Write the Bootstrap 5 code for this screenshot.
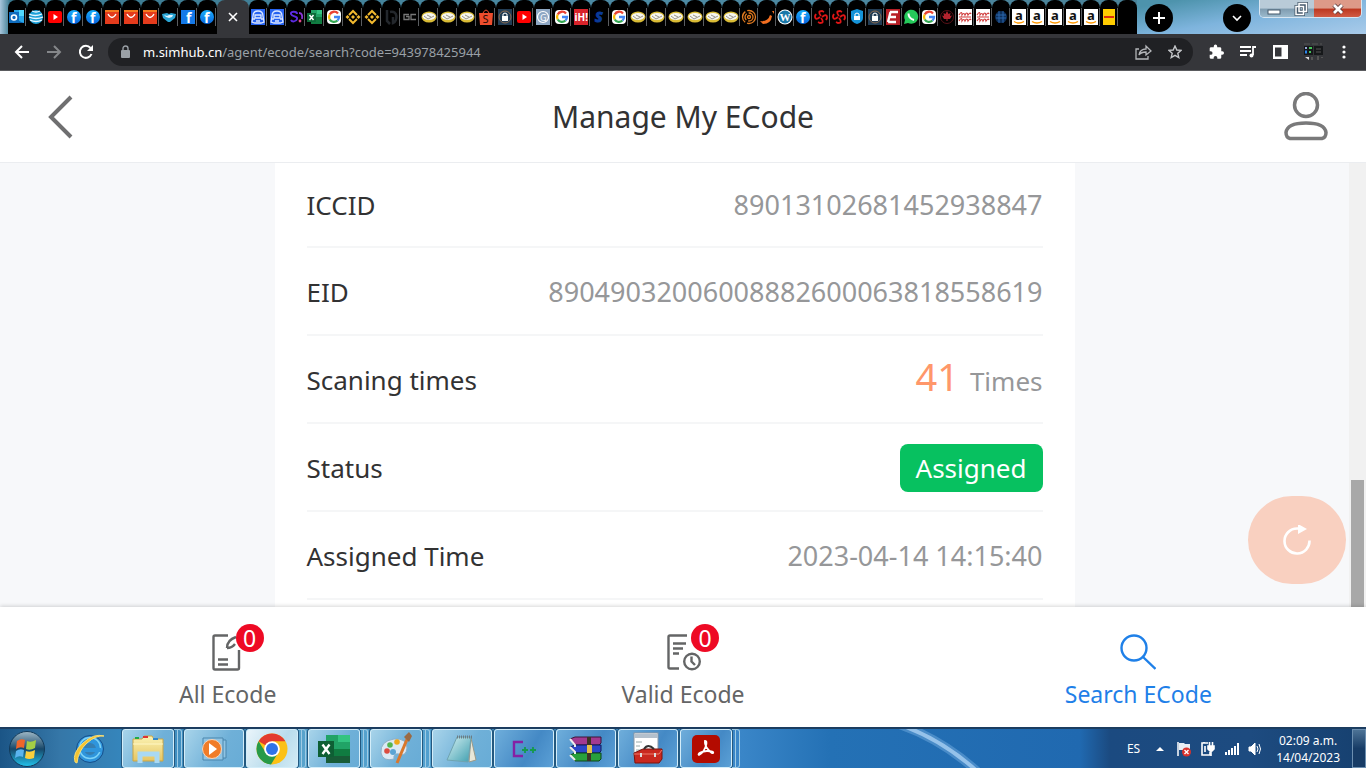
<!DOCTYPE html>
<html lang="en">
<head>
<meta charset="utf-8">
<meta name="viewport" content="width=device-width, initial-scale=1">
<title>Manage My ECode</title>
<link href="https://cdn.jsdelivr.net/npm/bootstrap@5.3.0/dist/css/bootstrap.min.css" rel="stylesheet">
<style>
  body { font-family: "Noto Sans", "Open Sans", sans-serif; color: #323233; overflow: hidden; }
  svg { display: block; flex: none; }
  a { color: inherit; text-decoration: none; }

  /* Browser window */
  .tabstrip { height: 34px; padding-left: 8px; background: linear-gradient(90deg, #a9c6dc 0, #3a7a90 10px, #4d8ba5 48%, #4a8298 84%, #6fa9cf 86%, #4a8ea6 88%, #7fb6dc 92%, #9cc6e8 100%); }
  .tab { width: 19px; height: 34px; background: #000; border-radius: 8px 8px 0 0; }
  .tab::after { content: ""; width: 1px; height: 18px; background: #5a5d60; flex: none; }
  .tab.slim { width: 18px; }
  .tab svg { overflow: visible; }
  .tabs { background: linear-gradient(transparent 8px, #000 8px); border-radius: 0 0 8px 0; }
  .tab-open { width: 32px; height: 34px; background: #35363a; border-radius: 8px 8px 0 0; color: #fff; }
  .tab-rest { width: 19px; background: #000; border-radius: 8px 8px 0 0; }
  .round-btn { width: 28px; height: 28px; background: #000; color: #fff; }
  .sky { background: linear-gradient(170deg, #4d93ac 10%, #7eb4dd 50%, #a9cbea 100%); }
  .win { border: 1px solid #d8e6f2; border-top: 0; border-radius: 0 0 5px 5px; height: 18px; overflow: hidden; }
  .win button { width: 27px; height: 18px; background: linear-gradient(#b9cbd8 45%, #7f9cb0 50%, #9fbdd0); border-right: 1px solid #56707f; }
  .win .quit { width: 47px; background: linear-gradient(#dd9a88 45%, #bd3820 50%, #d3604a); border: 0; }
  .toolbar { height: 37px; background: #35363a; border-bottom: 1px solid #5a5b5e; color: #fff; padding: 0 16px 0 14px; }
  .address { height: 28px; background: #202124; color: #9aa0a6; font-size: 13px; line-height: 28px; padding: 0 11px 0 12px; margin-left: 14px; }
  .mute { color: #85878a; }

  /* App */
  .app-head { height: 92px; background: #fff; border-bottom: 1px solid #ebedf0; padding: 0 36px; color: #6f6f70; }
  .app-head h1 { font-size: 30px; line-height: 40px; color: #323233; }
  .stage { background: #f7f8fa; min-height: 0; }
  .sheet { width: 800px; max-width: 100%; background: #fff; padding: 0 32px; font-size: 26px; line-height: 36px; }
  .line { height: 88px; flex: none; padding-top: 2px; border-bottom: 2px solid #f5f6f7; }
  .line:first-child { height: 85px; padding-top: 0; }
  .line dt { font-weight: 400; }
  .line dd { margin: 0; color: #969799; }
  .line .figures { font-size: 27px; }
  .count { font-size: 38px; line-height: 28px; color: #ff976a; margin-right: 11px; }
  .line .status { background: #07c160; color: #fff; border-radius: 8px; height: 48px; line-height: 48px; padding: 0 16px; }
  .scroll { width: 17px; background: #f1f1f1; padding: 0 2px; }
  .thumb { height: 127px; background: #a8a8a8; }
  .fab { right: 20px; bottom: 23px; width: 98px; height: 88px; border-radius: 44px; background: #f9d0c0; color: #fff; }
  .bottom-nav { height: 120px; padding-top: 8px; background: #fff; box-shadow: 0 -1px 4px rgba(0,0,0,.16); color: #646566; font-size: 23px; line-height: 30px; z-index: 2; }
  .bottom-nav .on { color: #1f80e8; }
  .pip { left: 26px; top: -9px; width: 28px; height: 28px; background: #ee0a24; color: #fff; line-height: 28px; }

  /* Desktop bar */
  .taskbar { height: 41px; border-top: 2px solid #1d3f63; color: #fff; background: linear-gradient(90deg, #1b5586 0, #3577a8 60px, #3585bb 120px, #58a3cc 300px, #4a9bd0 560px, #3a86c8 740px, #2471b5 830px, #2069b0 1080px, #1b4a80 1110px, #1d4b80 1250px, #16406f 100%); }
  .orb { width: 54px; }
  .task { width: 62px; height: 39px; padding-right: 2px; }
  .task > span { border: 1px solid #d3edf9; border-radius: 3px; background: linear-gradient(120deg, #a8d4ea, #6fb0d8 60%, #68acd6); box-shadow: 0 0 0 1px #23587f; }
  .task.dim > span { background: linear-gradient(120deg, #6faedb, #4489c5 60%, #5ba0d6); }
  .task.lit > span { background: linear-gradient(120deg, #eaf5fb, #b9dcec 60%, #d3ebf5); }
  .task.more::after { content: ""; width: 8px; flex: none; border: solid #9fcbe4; border-width: 1px 1px 1px 0; border-radius: 0 3px 3px 0; background: linear-gradient(90deg, transparent 3px, #9fcbe4 3px 4px, transparent 4px); }
  .tray { font-size: 12px; line-height: 17px; }
  .peek { width: 14px; border: 1px solid #6c8fb0; background: linear-gradient(#4d7396, #173c66 50%); }
</style>
</head>
<body class="vh-100 d-flex flex-column">

<svg width="0" height="0" class="position-absolute" aria-hidden="true">
  <defs>
    <linearGradient id="fbg" x2="0" y2="1"><stop stop-color="#19aefc"/><stop offset="1" stop-color="#0866e0"/></linearGradient>
    <linearGradient id="orbg" x2="0" y2="1"><stop stop-color="#9fb8c6"/><stop offset=".5" stop-color="#174769"/><stop offset="1" stop-color="#22c4ee"/></linearGradient>
    <linearGradient id="fold" x2="0" y2="1"><stop stop-color="#fbf3b4"/><stop offset="1" stop-color="#e6c561"/></linearGradient>
    <linearGradient id="pad" x2="1" y2="1"><stop stop-color="#d6f0f2"/><stop offset="1" stop-color="#3f9fb0"/></linearGradient>
  </defs>
</svg>

<!-- Favicons, drawn on a 16 by 16 grid -->
<template id="favicons"><svg>
  <g id="outlook"><path fill="#28a8ea" d="M5 1h10v13H5z"/><path fill="#50d9ff" d="M10 1h5v6h-5z"/><path fill="#0a60b0" d="M5 10l10 4H5z"/><rect y="3" width="10" height="11" fill="#0f6cbd"/><circle cx="5" cy="8.500" r="2.500" fill="none" stroke="#fff" stroke-width="1.600"/></g>
  <g id="att"><circle cx="8" cy="8" r="7" fill="#1ba0d8"/><path d="M1 5q6 3 13 0M1 8q7 3 14 0M2 11q6 3 12 0M4 2q4 2 8 0" stroke="#e6f6ff" stroke-width="1.300" fill="none"/></g>
  <g id="yt"><rect x="1" y="2" width="14" height="12" rx="2" fill="#f00"/><path d="M6.500 5l4.500 3-4.500 3z" fill="#fff"/></g>
  <g id="fb"><circle cx="8" cy="8" r="7" fill="url(#fbg)"/><text x="5" y="14" font-size="14" font-weight="700" fill="#fff">f</text></g>
  <g id="fbs"><rect x="1" y="1" width="14" height="14" fill="#1479e8"/><text x="6" y="14" font-size="14" font-weight="700" fill="#fff">f</text></g>
  <g id="ali"><rect x="1" y="1" width="14" height="14" fill="#e43b1c"/><path d="M1 1h14v2H1z" fill="#f47a1f"/><path d="M4 5q4 7 8 0" stroke="#fff" stroke-width="1.300" fill="none"/></g>
  <g id="shakeb"><path d="M1 5l5-1 2 1 2-1 5 1-1 4-5 4-2 0-5-4z" fill="#2aa5d4"/><path d="M3 6l3 1 2-1 4 0-1 2-3 1-3-1z" fill="#dff4ff"/></g>
  <g id="baidu"><rect x="1" y="0" width="14" height="16" fill="#2763f0"/><path d="M3 7q0-5 5-5t5 5l1 6-3 1H5l-3-1zM5 6h6v3H5zM6 12h4M3 10h2m6 0h2" stroke="#dce8ff" stroke-width="1.300" fill="none"/></g>
  <g id="sp"><path d="M9 5c0-3-7-3-6 0s7 2 6 5-5 3-6 1" stroke="#5b2be0" stroke-width="2" fill="none"/><path d="M11 4q4 0 3 6" stroke="#8a35d8" stroke-width="1.800" fill="none"/><circle cx="12" cy="12" r="1.400" fill="#e2468c"/></g>
  <g id="excel"><path fill="#21a366" d="M4 1h11v14H4z"/><path fill="#107c41" d="M9 8h6v7H4V8z"/><path fill="#33c481" d="M10 1h5v4h-5z"/><rect y="4" width="9" height="9" fill="#0b6b38"/><path d="M2.500 6l4 5m0-5l-4 5" stroke="#fff" stroke-width="1.500"/></g>
  <g id="goog"><rect x="1" y="1" width="14" height="14" rx="4" fill="#fff"/><g fill="none" stroke-width="2.300"><path d="M12 4.500A5 5 0 0 0 3.700 5.500" stroke="#ea4335"/><path d="M3.700 5.500a5 5 0 0 0 0 5" stroke="#fbbc05"/><path d="M3.700 10.500a5 5 0 0 0 7.800 1" stroke="#34a853"/><path d="M11.500 11.500A5 5 0 0 0 13 8H8" stroke="#4285f4"/></g></g>
  <g id="bin"><path d="M4 6l4-4 4 4M4 10l4 4 4-4" stroke="#f3ba2f" stroke-width="2" fill="none"/><path d="M8 6l2 2-2 2-2-2zM2.500 6L4.500 8 2.500 10 .5 8zM13.500 6L15.500 8l-2 2-2-2z" fill="#f3ba2f"/></g>
  <g id="darkb"><path d="M4 1v11l3 3M7 3c8-2 8 9 3 11V8" stroke="#23272c" stroke-width="2.500" fill="none"/></g>
  <g id="gc"><path d="M7 5.500H2v5h5v-3H4M14 5.500H9v5h5" stroke="#777" stroke-width="1.300" fill="none"/></g>
  <g id="shake"><ellipse cx="8" cy="8" rx="7.500" ry="5.500" fill="#d9bb35"/><ellipse cx="8" cy="7.500" rx="6.500" ry="3.500" fill="#f7f6f0"/><path d="M3 7l4 3 6-3M6 6l4 2" stroke="#98948a" fill="none"/></g>
  <g id="shopee"><path d="M1 4h14l-1 12H2z" fill="#ee4d2d"/><path d="M5 4q3-6 6 0" stroke="#ee4d2d" fill="none"/><text x="4.500" y="14" font-size="11" fill="#2a0a05">S</text></g>
  <g id="lock"><rect x="1" width="14" height="16" fill="#223d55"/><circle cx="8" cy="8" r="6" fill="none" stroke="#8a6a50"/><rect x="5" y="7" width="6" height="5" fill="#fff"/><path d="M6 7V5q2-2 4 0v2" stroke="#fff" fill="none"/></g>
  <g id="gg"><rect x="1" width="14" height="16" fill="#8fa8c4"/><circle cx="8" cy="8" r="5.500" fill="none" stroke="#fff" stroke-width="1.200"/><text x="5" y="11.500" font-size="9" fill="#fff">G</text></g>
  <g id="ih"><rect x="1" width="14" height="16" fill="#d8232a"/><text x="1.500" y="12" font-size="10" font-weight="700" fill="#fff">iH!</text></g>
  <g id="sblue"><text x="3" y="13" font-size="14" font-weight="800" font-style="italic" fill="#0a3a98" stroke="#0a3a98">S</text></g>
  <g id="spiral"><g fill="none" stroke="#e07a1f" stroke-width="1.300"><circle cx="8" cy="8" r="6.500" stroke-dasharray="12 2"/><circle cx="8" cy="8" r="4" stroke-dasharray="7 2"/><circle cx="8" cy="8" r="1.500"/></g></g>
  <g id="chili"><path d="M1 12q8 1 10-6l2 1q-1 8-9 8zM13 2h2v3z" fill="#f36f21"/></g>
  <g id="wp"><circle cx="8" cy="8" r="7.500" fill="#fff"/><circle cx="8" cy="8" r="6.500" fill="#1b78a8"/><text x="2.500" y="12" font-size="11" font-family="Liberation Serif, serif" font-weight="700" fill="#fff">W</text></g>
  <g id="swirl"><path d="M8 7q-4-5 1-5l2 1M9 8q5-4 5 1l-1 2M8 9q4 5-1 5l-2-1M7 8q-5 4-5-1l1-2" stroke="#e01515" stroke-width="1.800" fill="none"/></g>
  <g id="shield"><path d="M8 0l6 2v7q0 4-6 6-6-2-6-6V2z" fill="#1593d8"/><rect x="5" y="7" width="6" height="4" fill="#fff"/><path d="M6 7V5q2-2 4 0v2" stroke="#fff" fill="none"/></g>
  <g id="ered"><rect x="1" width="14" height="16" fill="#b71f26"/><path d="M5 3h8M4.500 8H11M3 13h8M5.500 3L3 13" stroke="#fff" stroke-width="2.400"/></g>
  <g id="wa"><path d="M1 15l1-4a7 7 0 1 1 3 3z" fill="#25c95a"/><path d="M5.500 4.500q0 5 5.500 6.500" stroke="#fff" stroke-width="2" fill="none"/></g>
  <g id="maple"><circle cx="8" cy="8" r="6.500" fill="none" stroke="#5a1218"/><path d="M8 2l1.500 3 2-1-.5 3 2-.5L11 10H8.500v2h-1v-2H5L3 6.500 5 7l-.5-3 2 1z" fill="#b3232e"/></g>
  <g id="script"><rect x="1" width="14" height="16" fill="#fff"/><path d="M2 6q3-5 3 0 2-3 3 0 2-4 3 0 2-3 3-1M2 12q3-5 3 0 2-3 3 0 2-4 3 0 2-3 3-1M2 8h12" stroke="#cf3a3a" stroke-width="1.200" fill="none"/></g>
  <g id="globe"><circle cx="8" cy="8" r="6" fill="#0d2f5a"/><path d="M3 6h10M3 9h10M6 2v12M10 2v12" stroke="#2a66ad"/></g>
  <g id="amz"><rect x="1" width="14" height="16" fill="#fff"/><text x="4" y="10.500" font-size="13" font-weight="700" fill="#111">a</text><path d="M3 12.500q5 3 10 0" stroke="#f90" stroke-width="1.400" fill="none"/></g>
  <g id="dhl"><rect x="2" width="12" height="16" fill="#fc0"/><path d="M3 8h10" stroke="#d40511" stroke-width="1.600"/></g>
</svg></template>

<!-- Tab strip -->
<header class="tabstrip d-flex flex-shrink-0">
  <nav class="tabs d-flex" aria-label="Tabs">
    <div class="d-flex" data-tabs="outlook att yt fb fb ali ali ali shakeb fbs fb"></div>
    <button class="tab-open btn border-0 p-0 d-flex align-items-center justify-content-center" aria-label="Close tab"><svg width="10" height="10" stroke="currentColor" stroke-width="1.600"><path d="M1 1l8 8M9 1L1 9"/></svg></button>
    <div class="d-flex" data-tabs="baidu baidu sp excel goog bin bin darkb gc shake shake shake shopee lock yt gg goog ih sblue goog shake shake shake"></div>
    <div class="d-flex" data-slim data-tabs="shake shake shake spiral chili wp fb swirl swirl shield lock ered wa goog maple script script globe amz amz amz amz amz dhl"></div>
    <span class="tab-rest"></span>
  </nav>
  <div class="sky d-flex flex-grow-1 ps-2">
    <button class="round-btn btn border-0 rounded-circle p-0 d-flex align-items-center justify-content-center mt-1" aria-label="New tab"><svg width="12" height="12" stroke="currentColor" stroke-width="2"><path d="M6 0v12M0 6h12"/></svg></button>
    <button class="round-btn btn border-0 rounded-circle p-0 d-flex align-items-center justify-content-center mt-1 ms-auto me-2" aria-label="Search tabs"><svg width="10" height="7" fill="none" stroke="currentColor" stroke-width="1.600"><path d="M1 1l4 4 4-4"/></svg></button>
    <div class="win d-flex me-1">
      <button class="btn rounded-0 border-0 p-0 d-flex align-items-center justify-content-center" aria-label="Minimize"><svg width="14" height="14"><rect x="1" y="8" width="12" height="4" fill="#fff" stroke="#44596b"/></svg></button>
      <button class="btn rounded-0 border-0 p-0 d-flex align-items-center justify-content-center" aria-label="Restore"><svg width="14" height="14" fill="none"><path d="M5 1.500h7.500v8H5zM2 4.500h7.500v8H2z" stroke="#44596b" stroke-width="3"/><path d="M5 1.500h7.500v8H5zM2 4.500h7.500v8H2z" stroke="#fff" stroke-width="1.500"/></svg></button>
      <button class="quit btn rounded-0 p-0 d-flex align-items-center justify-content-center" aria-label="Close"><svg width="14" height="12"><path d="M3 2l8 8M11 2l-8 8" stroke="#5b3a3a" stroke-width="4.500"/><path d="M3 2l8 8M11 2l-8 8" stroke="#fff" stroke-width="2.800"/></svg></button>
    </div>
  </div>
</header>

<!-- Toolbar -->
<div class="toolbar d-flex align-items-center flex-shrink-0">
  <a href="#" aria-label="Back"><svg width="16" height="16" fill="none" stroke="currentColor" stroke-width="2"><path d="M15 8H2M8 2L2 8l6 6"/></svg></a>
  <a href="#" aria-label="Forward" class="mute ms-3"><svg width="16" height="16" fill="none" stroke="currentColor" stroke-width="2"><path d="M1 8h13M8 2l6 6-6 6"/></svg></a>
  <a href="#" aria-label="Reload" class="ms-3"><svg width="16" height="16" fill="none" stroke="currentColor" stroke-width="2"><path d="M13.500 10a6 6 0 1 1-1-6"/><path d="M15 1v6H9z" fill="currentColor" stroke="none"/></svg></a>
  <div class="address rounded-pill d-flex align-items-center flex-grow-1">
    <svg width="11" height="14" fill="#9aa0a6"><rect x="1" y="5" width="9" height="8" rx="1"/><path d="M3 6V3.500a2.500 2.500 0 0 1 5 0V6" fill="none" stroke="#9aa0a6" stroke-width="1.400"/></svg>
    <a href="#" class="ms-2 ps-1 flex-grow-1 text-truncate"><span class="text-white">m.simhub.cn</span>/agent/ecode/search?code=943978425944</a>
    <svg class="me-3" width="17" height="16" fill="none" stroke="#b4b6b9" stroke-width="1.300"><path d="M4 5H1v10h12v-3M4 11q1-6 7-6V2l5 5-5 4V8q-5 0-7 3z"/></svg>
    <svg width="14" height="14" fill="none" stroke="#c4c6c9" stroke-width="1.400"><path d="M7 1l1.800 4 4.200.4-3.200 2.900 1 4.200L7 10.300l-3.800 2.200 1-4.200L1 5.400 5.200 5z"/></svg>
  </div>
  <svg class="ms-3" width="15" height="16" viewBox="1 1 22 22" fill="#fff"><path d="M20.500 11H19V7a2 2 0 0 0-2-2h-4V3.500a2.500 2.500 0 0 0-5 0V5H4a2 2 0 0 0-2 2v3.800h1.500a2.700 2.700 0 0 1 0 5.400H2V20a2 2 0 0 0 2 2h3.800v-1.500a2.700 2.700 0 0 1 5.400 0V22H17a2 2 0 0 0 2-2v-4h1.500a2.500 2.500 0 0 0 0-5z"/></svg>
  <svg class="ms-3" width="17" height="14" fill="none" stroke="#fff" stroke-width="1.800"><path d="M0 2h11M0 6h11M0 10h7M13 10V2h3"/><circle cx="11.500" cy="10.500" r="2" fill="#fff" stroke="none"/></svg>
  <svg class="ms-3" width="15" height="14"><path d="M0 0h15v14H0zM2 2.500v9h6.500v-9z" fill="#fff" fill-rule="evenodd"/></svg>
  <svg class="ms-3" width="20" height="18"><path d="M0 1h18" stroke="#555" stroke-dasharray="6 2"/><rect y="3" width="9" height="9" fill="#16181a"/><rect x="10" y="3" width="9" height="9" fill="#16181a"/><path d="M5 5h3M5 9h2" stroke="#46c25b" stroke-width="2"/><path d="M1 5h2" stroke="#9ad" stroke-width="2"/><path d="M1 9h2" stroke="#2b87f0" stroke-width="3"/><path d="M12 6h5M12 9h5" stroke="#555"/><path d="M1 14h4v3z" fill="#ddd"/><path d="M8 14v3M14 13v4M18 14v1" stroke="#555" stroke-width="2"/></svg>
  <svg class="ms-3 me-1" width="6" height="14" fill="#fff"><circle cx="4" cy="2" r="1.600"/><circle cx="4" cy="7" r="1.600"/><circle cx="4" cy="12" r="1.600"/></svg>
</div>

<!-- App header -->
<div class="app-head d-flex align-items-center justify-content-between flex-shrink-0">
  <a href="#" aria-label="Back"><svg width="46" height="46" fill="none" stroke="currentColor" stroke-width="4"><path d="M35 3L15 23l20 20"/></svg></a>
  <h1 class="fw-normal m-0">Manage My ECode</h1>
  <a href="#" aria-label="Account"><svg width="46" height="50" fill="none" stroke="#79797a" stroke-width="3.500"><circle cx="22" cy="13" r="11.500"/><path d="M6 46.500q-4-1-4-6C3 33 13 31 22 31s19 2 20 9.500q0 5-4 6z"/></svg></a>
</div>

<main class="stage position-relative d-flex flex-grow-1">
  <div class="flex-grow-1 d-flex justify-content-center overflow-hidden">
    <dl class="sheet d-flex flex-column m-0">
      <div class="line d-flex align-items-center justify-content-between"><dt>ICCID</dt><dd class="figures">89013102681452938847</dd></div>
      <div class="line d-flex align-items-center justify-content-between"><dt>EID</dt><dd class="figures">89049032006008882600063818558619</dd></div>
      <div class="line d-flex align-items-center justify-content-between"><dt>Scaning times</dt><dd class="d-flex align-items-baseline"><span class="count">41</span>Times</dd></div>
      <div class="line d-flex align-items-center justify-content-between"><dt>Status</dt><dd class="status">Assigned</dd></div>
      <div class="line d-flex align-items-center justify-content-between"><dt>Assigned Time</dt><dd class="figures">2023-04-14 14:15:40</dd></div>
    </dl>
  </div>
  <div class="scroll d-flex flex-column justify-content-end"><div class="thumb"></div></div>
  <button class="fab btn border-0 p-0 position-absolute d-flex align-items-center justify-content-center" aria-label="Refresh"><svg width="28" height="30" fill="none" stroke="#fff" stroke-width="2.600"><path d="M26.500 15.500A12.500 12.500 0 1 1 14 3.500h3"/><path d="M15-1l9 5-9 5z" fill="#fff" stroke="none"/></svg></button>
</main>

<nav class="bottom-nav position-relative d-flex flex-shrink-0" aria-label="Sections">
  <a href="#" class="col-4 d-flex flex-column align-items-center justify-content-center gap-2">
    <span class="position-relative"><svg width="36" height="38" fill="none" stroke="#646566" stroke-width="2.400"><path d="M18 2.500H5q-1.500 0-1.500 1.500v31q0 1.500 1.500 1.500h22.500q1.500 0 1.500-1.500V17M8 26.500h10M8 31.500h10M17 15q0-8 9-11M17 15q5 0 8-4"/></svg>
      <span class="pip position-absolute rounded-circle text-center">0</span></span>
    <span>All Ecode</span>
  </a>
  <a href="#" class="col-4 d-flex flex-column align-items-center justify-content-center gap-2">
    <span class="position-relative"><svg width="36" height="38" fill="none" stroke="#646566" stroke-width="2.400"><path d="M22 2.500H5q-1.500 0-1.500 1.500v30q0 1.500 1.500 1.500h9M8 10.500h13M8 15.500h10M8 20.500h6"/><circle cx="27" cy="28.500" r="7.800"/><path d="M26.500 23.500v5l3.500 3.500"/></svg>
      <span class="pip position-absolute rounded-circle text-center">0</span></span>
    <span>Valid Ecode</span>
  </a>
  <a href="#" class="on col-4 d-flex flex-column align-items-center justify-content-center gap-2">
    <svg width="36" height="38" fill="none" stroke="currentColor" stroke-width="2.400"><circle cx="14" cy="15" r="12.500"/><path d="M23 24l12.500 12"/></svg>
    <span>Search ECode</span>
  </a>
</nav>

<!-- Desktop bar -->
<footer class="taskbar d-flex flex-shrink-0 overflow-hidden">
  <a href="#" class="orb d-flex align-items-center justify-content-center" aria-label="Start"><svg width="38" height="38"><circle cx="19" cy="19" r="17.500" fill="url(#orbg)" stroke="#123a5a"/><path d="M9 11q4-3 8-1l-1 8q-4-2-8 1z" fill="#f0662a"/><path d="M19 11q4 2 9-1l-1 8q-5 3-9 1z" fill="#a4cf45"/><path d="M8 21q4-3 8-1l-1 7q-4-2-8 1z" fill="#5ab4ef"/><path d="M18 21q4 2 9-1l-1 8q-5 2-9 0z" fill="#fbcf3c"/></svg></a>
  <a href="#" class="d-flex align-items-center justify-content-center ms-3" aria-label="Browser"><svg width="52" height="36"><circle cx="20" cy="18" r="9.500" fill="none" stroke="#2f95dc" stroke-width="7"/><circle cx="20" cy="17" r="10.500" fill="none" stroke="#7dd3f7" stroke-width="1.500"/><path d="M12 17h19v4H12z" fill="#2f95dc"/><circle cx="20" cy="18" r="13.500" fill="none" stroke="#14508f"/><path d="M5 31Q2 22 13 12T34 5q-8-1-17 7T7 32z" fill="#f4c430" stroke="#f8dd74"/></svg></a>
  <a href="#" class="task more d-flex" aria-label="Files"><span class="flex-grow-1 d-flex align-items-center justify-content-center"><svg width="34" height="32"><path d="M2 6h9l2-3h8l2 3h9v22H2z" fill="url(#fold)" stroke="#c9a545"/><path d="M12 4h5" stroke="#d33" stroke-width="2"/><path d="M22 6h5" stroke="#38c" stroke-width="2"/><path d="M4 5h4" stroke="#2a4" stroke-width="2"/><path d="M2 11h30" stroke="#fff7c4"/><path d="M9 30v-9h17v9" fill="none" stroke="#a9d9f3" stroke-width="5"/></svg></span></a>
  <a href="#" class="task d-flex" aria-label="Media"><span class="flex-grow-1 d-flex align-items-center justify-content-center"><svg width="28" height="28"><path d="M3 3h20v22H3zM23 5h3v18h-3" fill="#8fc4e4" stroke="#4b86ad"/><circle cx="12" cy="14" r="9.500" fill="#f07c28" stroke="#f7d4b8"/><path d="M9 8l8 6-8 6z" fill="#fff"/></svg></span></a>
  <a href="#" class="task more lit d-flex" aria-label="Chrome"><span class="flex-grow-1 d-flex align-items-center justify-content-center"><svg width="32" height="32"><circle cx="16" cy="16" r="15.500" fill="#fbc116"/><path d="M16 16L2.600 8.200A15.500 15.500 0 0 1 29.400 8.200H16z" fill="#e33b2e"/><path d="M2.600 8.200A15.500 15.500 0 0 0 15 31.500L22 20l-12 0z" fill="#269a49"/><circle cx="16" cy="16" r="7.800" fill="#fff"/><circle cx="16" cy="16" r="6" fill="#2f73e8"/></svg></span></a>
  <a href="#" class="task more d-flex" aria-label="Spreadsheets"><span class="flex-grow-1 d-flex align-items-center justify-content-center"><svg width="34" height="28"><path d="M9 0h24v28H9z" fill="#21a366"/><path d="M21 0h12v7H21z" fill="#33c481"/><path d="M9 14h24v14H9z" fill="#107c41"/><path d="M9 21h24v7H9z" fill="#185c37"/><rect x="1" y="6" width="16" height="16" fill="#0e5f34"/><path d="M5.500 9.500l7 9.500m0-9.500l-7 9.500" stroke="#fff" stroke-width="2.400"/></svg></span></a>
  <a href="#" class="task more d-flex" aria-label="Paint"><span class="flex-grow-1 d-flex align-items-center justify-content-center"><svg width="34" height="34"><path d="M2 21Q1 9 15 7q13-1 13 9-1 9-8 6-6-1-5 5-11 3-13-6z" fill="#dbe9f4" stroke="#8fafc6"/><circle cx="8" cy="19" r="2.800" fill="#dc4b3f"/><circle cx="11" cy="13" r="2.800" fill="#53b551"/><circle cx="18" cy="10" r="2.800" fill="#eda81c"/><circle cx="14" cy="20" r="3" fill="#5ba4d4"/><path d="M29 5L18 31" stroke="#d9772c" stroke-width="3"/><path d="M25 5l5-5 3 4-3 6z" fill="#9a6a43"/></svg></span></a>
  <a href="#" class="task d-flex" aria-label="Notes"><span class="flex-grow-1 d-flex align-items-center justify-content-center"><svg width="34" height="32"><path d="M26 5l5 22-7 2z" fill="#e9e7d8" stroke="#9a9a88"/><path d="M12 4h14l-3 25L2 27z" fill="url(#pad)" stroke="#6fa3b0"/><path d="M12 4h15" stroke="#6c7c85" stroke-width="3" stroke-dasharray="1 1"/></svg></span></a>
  <a href="#" class="task dim d-flex" aria-label="C++"><span class="flex-grow-1 d-flex align-items-center justify-content-center"><svg width="24" height="18" fill="none"><path d="M11 2H2v14h9" stroke="#8620a4" stroke-width="2.400"/><path d="M10 10h6M13 7v6M18 10h6M21 7v6" stroke="#159a4d" stroke-width="1.800"/></svg></span></a>
  <a href="#" class="task dim d-flex" aria-label="Archives"><span class="flex-grow-1 d-flex align-items-center justify-content-center"><svg width="34" height="28"><path d="M1 4l5-2h26v6l-2 2H6z" fill="#a23a90" stroke="#3c1438"/><path d="M1 12l5-2h26v6l-2 2H6z" fill="#2b46c8" stroke="#101c5c"/><path d="M1 20l5-2h26v6l-2 2H6z" fill="#28a13c" stroke="#0d4418"/><path d="M1 4l5 6v2M1 12l5 5v2M1 20l5 5" stroke="#eee" stroke-width="2"/><path d="M20 2v24" stroke="#3d3426" stroke-width="4"/><rect x="18" y="10" width="5" height="8" fill="#e5c04a"/></svg></span></a>
  <a href="#" class="task dim d-flex" aria-label="Tools"><span class="flex-grow-1 d-flex align-items-center justify-content-center"><svg width="34" height="34"><rect x="3" y="1" width="24" height="24" fill="#fff" stroke="#8a96a4"/><path d="M3 4h24" stroke="#b4c0cc" stroke-width="4"/><path d="M5 10h6M5 14h4M5 18h6" stroke="#9aa"/><path d="M3 21l9-4h19v10l-3 4H4z" fill="#c9281f" stroke="#7d120c"/><path d="M3 22h25l3-4" stroke="#ef7a6a" fill="none"/><path d="M13 17q4-6 10 0" stroke="#333" stroke-width="2" fill="none"/><path d="M10 21v4M24 21v4" stroke="#ddd" stroke-width="2"/></svg></span></a>
  <a href="#" class="task dim more d-flex" aria-label="Acrobat"><span class="flex-grow-1 d-flex align-items-center justify-content-center"><svg width="30" height="30"><rect x="1" y="1" width="28" height="28" rx="5" fill="#b30b00"/><path d="M14 7c4 0-1 12-6 14-2-1 3-4 8-4s7 1 6 2-9-6-8-12z" fill="none" stroke="#fff" stroke-width="1.800"/></svg></span></a>
  <svg class="ms-auto" width="230" height="41" aria-hidden="true"><path d="M-2-6Q44 9 82 44" fill="none" stroke="#6fa9de" stroke-width="9" opacity=".5"/><path d="M-2-6Q44 9 82 44" fill="none" stroke="#a9cff2" stroke-width="4" opacity=".8"/></svg>
  <div class="tray d-flex align-items-center gap-2">
    <span class="me-2">ES</span>
    <svg width="8" height="5" fill="#fff"><path d="M0 5l4-4 4 4z"/></svg>
    <svg class="ms-1" width="16" height="16"><path d="M2 1v14" stroke="#fff" stroke-width="1.500"/><path d="M3 2h5l1 1h5v7H8L7 9H3z" fill="#e8eef4"/><circle cx="10.500" cy="11" r="4.500" fill="#d9322c"/><path d="M8.500 9l4 4m0-4l-4 4" stroke="#fff" stroke-width="1.400"/></svg>
    <svg width="16" height="16" fill="none" stroke="#fff" stroke-width="1.600"><path d="M8 2H2v12h8v-3M4 2V1M5 5v6"/><path d="M8 5h6v3l-2 2h-2L8 8z" fill="#fff"/><path d="M9.500 5V1M12.500 5V1M11 10v5"/></svg>
    <svg width="16" height="14" stroke="#fff" stroke-width="2"><path d="M2 13v-3M5 13V8M8 13V6M11 13V4M14 13V1"/></svg>
    <svg width="16" height="16" fill="none" stroke="#fff"><path d="M1 6h2l4-4v12l-4-4H1z" fill="#fff"/><path d="M9 5q2 3 0 6M11 3q3 5 0 10"/></svg>
    <div class="text-center ms-1 me-1"><div>02:09 a.m.</div><div>14/04/2023</div></div>
    <span class="peek align-self-stretch"></span>
  </div>
</footer>

<script src="https://cdn.jsdelivr.net/npm/bootstrap@5.3.0/dist/js/bootstrap.bundle.min.js"></script>
<script>
  // One narrow tab per favicon name
  var icons = document.getElementById('favicons').content;
  document.querySelectorAll('[data-tabs]').forEach(function (group) {
    var slim = group.hasAttribute('data-slim') ? ' slim' : '';
    group.innerHTML = group.dataset.tabs.split(' ').map(function (name) {
      return '<a href="#" class="tab' + slim + ' d-flex align-items-center justify-content-center"><svg width="16" height="16" viewBox="0 0 16 16">' + icons.querySelector('#' + name).innerHTML + '</svg></a>';
    }).join('');
  });
</script>
</body>
</html>
